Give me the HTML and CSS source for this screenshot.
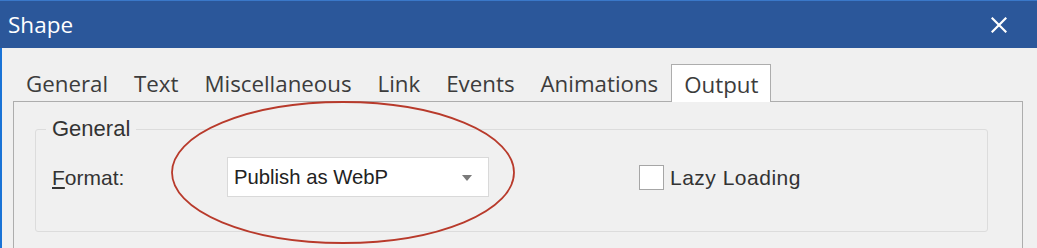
FILE: index.html
```html
<!DOCTYPE html>
<html lang="en">
<head>
    <meta charset="UTF-8">
    <meta name="viewport" content="width=device-width, initial-scale=1.0">
    <title>Shape</title>
    <link rel="stylesheet" href="styles.css">
</head>
<body>
    <div class="window">
        <div class="titlebar">
            <span class="title">Shape</span>
            <svg class="close" width="16" height="16" viewBox="0 0 16 16">
                <path d="M1.5 1.5 L14.5 14.5 M14.5 1.5 L1.5 14.5" stroke="#fff" stroke-width="2.2" stroke-linecap="square"/>
            </svg>
        </div>
        <div class="content">
            <div class="tabs">
                <div class="tab">General</div>
                <div class="tab">Text</div>
                <div class="tab">Miscellaneous</div>
                <div class="tab">Link</div>
                <div class="tab">Events</div>
                <div class="tab">Animations</div>
                <div class="tab active">Output</div>
            </div>
            <div class="panel">
                <fieldset class="group">
                    <legend>General</legend>
                    <div class="row">
                        <label class="field-label" for="format"><u>F</u>ormat:</label>
                        <div class="combo" id="format">
                            <span>Publish as WebP</span>
                            <svg width="10" height="6" viewBox="0 0 10 6"><path d="M0 0 H10 L5 6 Z" fill="#7a7a7a"/></svg>
                        </div>
                        <span class="checkbox"></span>
                        <span class="check-label">Lazy Loading</span>
                    </div>
                </fieldset>
            </div>
        </div>
        <!-- annotation drawn over the dialog -->
        <svg class="mark" width="350" height="148" viewBox="0 0 350 148">
            <ellipse cx="173" cy="72.5" rx="171" ry="70.5" fill="none" stroke="#b83a2b" stroke-width="1.8"/>
        </svg>
    </div>
</body>
</html>
```

FILE: styles.css
```css
html, body {
    margin: 0;
    padding: 0;
}

body {
    width: 1037px;
    height: 248px;
    overflow: hidden;
    background: #f0f0f0;
    font-family: "Liberation Sans", Arial, sans-serif;
    color: #333;
}

.window {
    position: relative;
    height: 248px;
    overflow: hidden;
}

.titlebar {
    height: 47px;
    border-top: 1px solid #3a78c9;
    background: #2b579a;
    display: flex;
    align-items: center;
    justify-content: space-between;
    padding: 0 30px 0 8px;
}

.title {
    font-family: "Open Sans", sans-serif;
    font-size: 22.5px;
    color: #fff;
    margin-top: -1px;
}

.close {
    display: block;
}

.content {
    height: 200px;
    overflow: hidden;
    border-left: 2px solid #1a73d6;
    padding: 16px 14px 0 11px;
    box-sizing: border-box;
}

.tabs {
    display: flex;
    align-items: flex-end;
    height: 37px;
}

.tab {
    font-family: "Open Sans", sans-serif;
    font-size: 22.3px;
    color: #3c3c3c;
    padding: 0 13px;
    height: 37px;
    line-height: 40px;
    box-sizing: border-box;
}

.tab.active {
    background: #fff;
    border: 1px solid #adadad;
    border-bottom: none;
    height: 38px;
    margin-bottom: -1px;
    padding: 0 12px;
    position: relative;
    z-index: 1;
}

.panel {
    border: 1px solid #adadad;
    border-bottom: none;
    padding: 16px 34px 20px 21px;
}

.group {
    margin: 0;
    padding: 0;
    border: 1px solid #dcdcdc;
    border-radius: 3px;
}

.group legend {
    margin-left: 10px;
    padding: 0 6px;
    font-size: 22px;
    line-height: 22px;
    color: #333;
}

.row {
    display: flex;
    align-items: center;
    padding: 17px 16px 34px 16px;
    font-size: 21px;
}

.field-label {
    width: 175px;
    padding-top: 2px;
}

.field-label u {
    text-underline-offset: 2px;
}

.combo {
    width: 262px;
    height: 40px;
    box-sizing: border-box;
    background: #fff;
    border: 1px solid #d9d9d9;
    display: flex;
    align-items: center;
    justify-content: space-between;
    padding: 1px 16px 0 6px;
    font-size: 20.3px;
    color: #222;
}

.combo svg {
    display: block;
}

.checkbox {
    width: 25px;
    height: 25px;
    box-sizing: border-box;
    background: #fff;
    border: 1px solid #a6a6a6;
    margin-left: 150px;
}

.check-label {
    margin-left: 6px;
    padding-top: 2px;
    letter-spacing: 0.5px;
}

.mark {
    position: absolute;
    left: 170px;
    top: 100px;
}
```
